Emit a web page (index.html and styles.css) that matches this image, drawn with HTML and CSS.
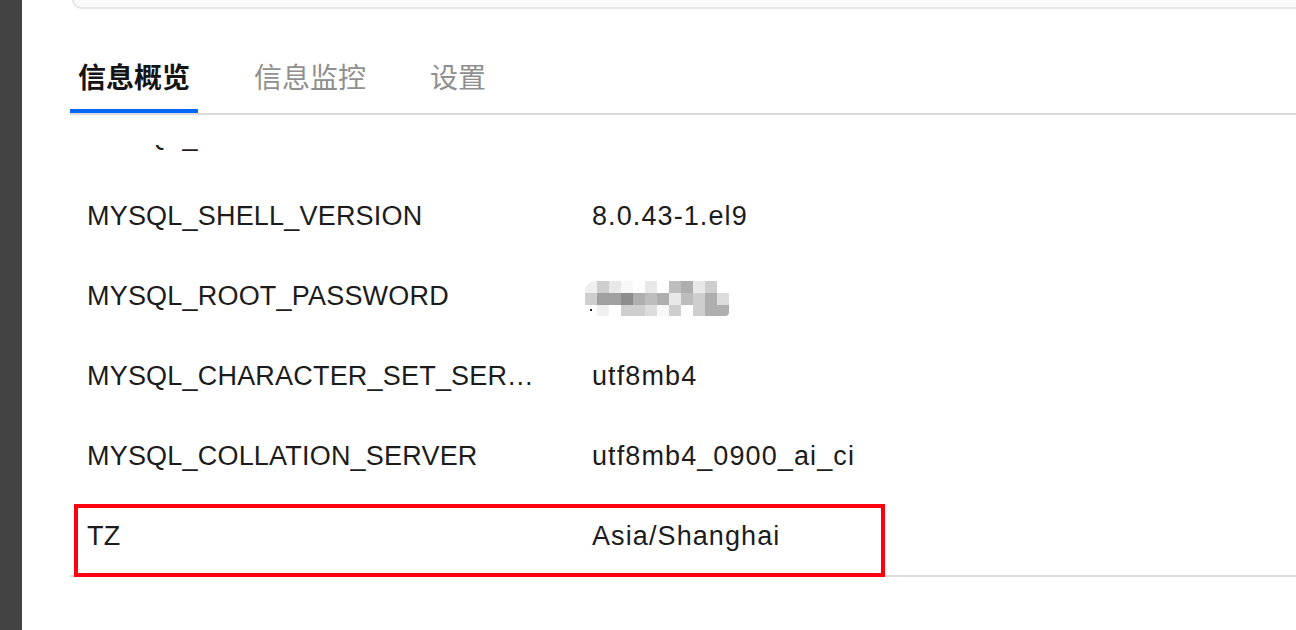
FILE: index.html
```html
<!DOCTYPE html>
<html lang="zh-CN">
<head>
<meta charset="utf-8">
<title>信息概览</title>
<link rel="stylesheet" href="styles.css">
</head>
<body>
<div class="page">
  <aside class="side"></aside>
  <main class="main">
    <div class="top-card"></div>
    <nav class="tabs">
      <div class="tab active">信息概览</div>
      <div class="tab">信息监控</div>
      <div class="tab">设置</div>
    </nav>
    <div class="table-wrap">
      <div class="rows">
        <div class="row"><div class="key">MYSQL_VERSION</div><div class="val">8.0.43-1.el9</div></div>
        <div class="row"><div class="key">MYSQL_SHELL_VERSION</div><div class="val">8.0.43-1.el9</div></div>
        <div class="row"><div class="key">MYSQL_ROOT_PASSWORD</div><div class="val">
          <div class="mosaic" aria-label="已打码">
            <i class="s2"></i><i class="s5"></i><i class="s3"></i><i class="s1"></i><i class="s0"></i><i class="s3"></i><i class="s0"></i><i class="s6"></i><i class="s7"></i><i class="s3"></i><i class="s5"></i><i class="s0"></i>
            <i class="s5"></i><i class="s8"></i><i class="s8"></i><i class="s9"></i><i class="s7"></i><i class="s6"></i><i class="s7"></i><i class="s3"></i><i class="s6"></i><i class="s5"></i><i class="s7"></i><i class="s4"></i>
            <i class="s0 dot"></i><i class="s2"></i><i class="s0"></i><i class="s5"></i><i class="s5"></i><i class="s4"></i><i class="s1"></i><i class="s5"></i><i class="s0"></i><i class="s5"></i><i class="s7"></i><i class="s7"></i>
          </div>
        </div></div>
        <div class="row"><div class="key">MYSQL_CHARACTER_SET_SERVER</div><div class="val">utf8mb4</div></div>
        <div class="row"><div class="key">MYSQL_COLLATION_SERVER</div><div class="val">utf8mb4_0900_ai_ci</div></div>
        <div class="row"><div class="key">TZ</div><div class="val">Asia/Shanghai</div></div>
      </div>
    </div>
    <div class="highlight"></div>
  </main>
</div>
</body>
</html>
```
FILE: styles.css
```css
* { box-sizing: border-box; }
html, body { margin: 0; padding: 0; background: #fff; }
body {
  font-family: "Liberation Sans", Arial, "Noto Sans CJK SC", sans-serif;
  color: #1c1c1c;
  overflow: hidden;
}
.page { display: flex; width: 1296px; height: 630px; }
.side { width: 22px; flex: none; background: #434343; }
.main { flex: 1; position: relative; padding-left: 48px; }

.top-card {
  height: 9px;
  margin-left: 2px;
  background: #fafafa;
  border-left: 2px solid #e6e6e6;
  border-bottom: 2px solid #e6e6e6;
  border-bottom-left-radius: 12px;
}

.tabs {
  display: flex;
  gap: 48px;
  margin-top: 47px;
  border-bottom: 2px solid #dadada;
  font-family: "Noto Sans CJK SC", sans-serif;
}
.tab {
  font-size: 28px;
  line-height: 40px;
  padding: 0 8px 13px;
  color: #8f8f8f;
  border-bottom: 4px solid transparent;
}
.tab.active {
  color: #141414;
  font-weight: 700;
  border-bottom-color: #0068ff;
}

.table-wrap {
  margin-top: 30px;
  height: 432px;
  overflow: hidden;
  border-bottom: 2px solid #dedede;
}
.rows { margin-top: -50px; }
.row {
  display: flex;
  height: 80px;
  padding-top: 3px;
  align-items: center;
  font-size: 27px;
  letter-spacing: 0.2px;
}
.key {
  width: 505px;
  flex: none;
  padding: 0 24px 0 17px;
  white-space: nowrap;
  overflow: hidden;
  text-overflow: ellipsis;
}
.val { padding-left: 17px; white-space: nowrap; letter-spacing: 1.1px; }

.mosaic {
  display: grid;
  grid-template-columns: repeat(12, 12px);
  grid-template-rows: 12px 12px 11px;
  margin-left: -7px;
  margin-top: 4px;
  border-radius: 10px 4px 4px 8px;
  overflow: hidden;
}
.mosaic i { display: block; position: relative; }
.mosaic .dot::after {
  content: "";
  position: absolute;
  left: 5px; top: 4px;
  width: 2px; height: 2px;
  background: #222;
}
.s0 { background: #fff; }
.s1 { background: #f8f8f8; }
.s2 { background: #f0f0f0; }
.s3 { background: #e8e8e8; }
.s4 { background: #dcdcdc; }
.s5 { background: #cecece; }
.s6 { background: #bdbdbd; }
.s7 { background: #aeaeae; }
.s8 { background: #a0a0a0; }
.s9 { background: #8c8c8c; }

.highlight {
  position: absolute;
  left: 52px;
  top: 504px;
  width: 811px;
  height: 73px;
  border: 4px solid #ff0010;
  pointer-events: none;
}
```
